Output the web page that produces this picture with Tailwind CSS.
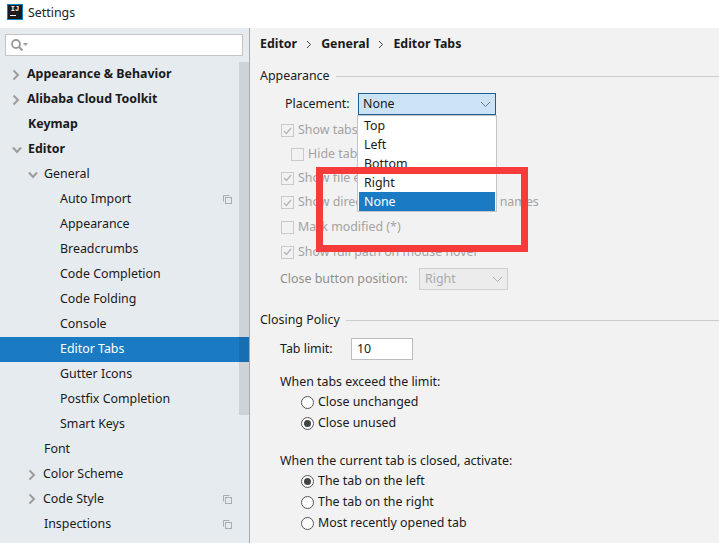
<!DOCTYPE html>
<html>
<head>
<meta charset="utf-8">
<script src="https://cdn.jsdelivr.net/npm/@tailwindcss/browser@4"></script>
</head>
<body class="w-[719px] h-[543px] overflow-hidden bg-[#f2f2f2] font-['Noto_Sans','Open_Sans',sans-serif] text-[12.4px] text-[#1a1a1a]">
<div class="relative w-[719px] h-[543px] flex flex-col overflow-hidden">
  <!-- title bar -->
  <div class="h-[28px] bg-white flex items-center pl-[7px] gap-[5px] shrink-0">
    <div class="self-start mt-[4px] w-[16px] h-[16px] bg-[#1b1b1b] border border-[#1c7ec9] text-white text-[7px] font-bold leading-[9px] text-center font-['Liberation_Mono',monospace]">IJ<div class="w-[6px] h-px bg-white ml-[2px] mt-px"></div></div>
    <span class="text-[#222] mb-[1px]">Settings</span>
  </div>
  <div class="flex flex-1 min-h-0">
    <!-- sidebar -->
    <aside class="relative w-[250px] shrink-0 bg-[#e6ebf0] border-r border-[#a9a9a9] flex flex-col">
      <div class="mx-[5px] mt-[6px] h-[22px] w-[238px] bg-white border border-[#c4c4c4] flex items-center pl-[4px] shrink-0">
        <svg width="18" height="14" viewBox="0 0 18 14" fill="none"><circle cx="6" cy="6" r="4" stroke="#9a9a9a" stroke-width="1.8"/><path d="M9 9l3.500 3.500" stroke="#9a9a9a" stroke-width="2"/><path d="M13 5h5l-2.500 3z" fill="#9a9a9a"/></svg>
      </div>
      <div class="absolute left-[239px] top-[34px] w-[10px] h-[353px] bg-black/10 z-10"></div>
      <nav class="mt-[6px]">
        <div class="h-[25px] flex items-center pl-[12px] font-bold"><svg class="w-[8px] h-[12px] mr-[7px]" viewBox="0 0 8 12" fill="none"><path d="M1.500 1.500L6 6l-4.500 4.500" stroke="#9c9c9c" stroke-width="2"/></svg>Appearance &amp; Behavior</div>
        <div class="h-[25px] flex items-center pl-[12px] font-bold"><svg class="w-[8px] h-[12px] mr-[7px]" viewBox="0 0 8 12" fill="none"><path d="M1.500 1.500L6 6l-4.500 4.500" stroke="#9c9c9c" stroke-width="2"/></svg>Alibaba Cloud Toolkit</div>
        <div class="h-[25px] flex items-center pl-[28px] font-bold">Keymap</div>
        <div class="h-[25px] flex items-center pl-[12px] font-bold"><svg class="w-[10px] h-[8px] mr-[6px]" viewBox="0 0 10 8" fill="none"><path d="M1 1.500l4 4.500 4-4.500" stroke="#9c9c9c" stroke-width="2"/></svg>Editor</div>
        <div class="h-[25px] flex items-center pl-[28px]"><svg class="w-[10px] h-[8px] mr-[6px]" viewBox="0 0 10 8" fill="none"><path d="M1 1.500l4 4.500 4-4.500" stroke="#9c9c9c" stroke-width="2"/></svg>General</div>
        <div class="h-[25px] flex items-center justify-between pl-[60px] pr-[17px]">Auto Import<svg width="9" height="9" viewBox="0 0 9 9" fill="none" stroke="#a8adb2"><path d="M.5 6.500V.5h6"/><rect x="2.500" y="2.500" width="6" height="6"/></svg></div>
        <div class="h-[25px] flex items-center pl-[60px]">Appearance</div>
        <div class="h-[25px] flex items-center pl-[60px]">Breadcrumbs</div>
        <div class="h-[25px] flex items-center pl-[60px]">Code Completion</div>
        <div class="h-[25px] flex items-center pl-[60px]">Code Folding</div>
        <div class="h-[25px] flex items-center pl-[60px]">Console</div>
        <div class="h-[25px] flex items-center pl-[60px] bg-[#1a7bc4] text-white">Editor Tabs</div>
        <div class="h-[25px] flex items-center pl-[60px]">Gutter Icons</div>
        <div class="h-[25px] flex items-center pl-[60px]">Postfix Completion</div>
        <div class="h-[25px] flex items-center pl-[60px]">Smart Keys</div>
        <div class="h-[25px] flex items-center pl-[44px]">Font</div>
        <div class="h-[25px] flex items-center pl-[28px]"><svg class="w-[8px] h-[12px] mr-[7px]" viewBox="0 0 8 12" fill="none"><path d="M1.500 1.500L6 6l-4.500 4.500" stroke="#9c9c9c" stroke-width="2"/></svg>Color Scheme</div>
        <div class="h-[25px] flex items-center justify-between pl-[28px] pr-[17px]"><span class="flex items-center"><svg class="w-[8px] h-[12px] mr-[7px]" viewBox="0 0 8 12" fill="none"><path d="M1.500 1.500L6 6l-4.500 4.500" stroke="#9c9c9c" stroke-width="2"/></svg>Code Style</span><svg width="9" height="9" viewBox="0 0 9 9" fill="none" stroke="#a8adb2"><path d="M.5 6.500V.5h6"/><rect x="2.500" y="2.500" width="6" height="6"/></svg></div>
        <div class="h-[25px] flex items-center justify-between pl-[44px] pr-[17px]">Inspections<svg width="9" height="9" viewBox="0 0 9 9" fill="none" stroke="#a8adb2"><path d="M.5 6.500V.5h6"/><rect x="2.500" y="2.500" width="6" height="6"/></svg></div>
      </nav>
    </aside>
    <!-- main -->
    <main class="flex-1 pl-[10px] min-w-0">
      <div class="h-[32px] flex items-center font-bold">
        <span>Editor</span>
        <svg class="mx-[9px]" width="6" height="9" viewBox="0 0 6 9" fill="none"><path d="M1 1l3.500 3.500L1 8" stroke="#444"/></svg>
        <span>General</span>
        <svg class="mx-[9px]" width="6" height="9" viewBox="0 0 6 9" fill="none"><path d="M1 1l3.500 3.500L1 8" stroke="#444"/></svg>
        <span>Editor Tabs</span>
      </div>
      <div class="h-[32px] flex items-center gap-[6px]"><span>Appearance</span><span class="flex-1 h-px bg-[#cdcdcd]"></span></div>
      <div class="h-[26px] ml-[25px] mt-[-1px] flex items-center">
        <span class="w-[73px] pt-px">Placement:</span>
        <div class="w-[138px] h-[22px] bg-[#cce3f6] border border-[#1c5f96] flex items-center justify-between pl-[4px] pr-[4px]"><span class="pt-px">None</span><svg width="11" height="7" viewBox="0 0 11 7" fill="none"><path d="M1 1l4.500 4.500L10 1" stroke="#6f7b85"/></svg></div>
      </div>
      <div class="text-[#a3a3a3] mt-[1px]">
        <div class="h-[25px] ml-[21px] flex items-center gap-[4px]"><span class="w-[13px] h-[13px] border border-[#c9c9c9] bg-[#f2f2f2] flex items-center justify-center"><svg width="9" height="8" viewBox="0 0 9 8" fill="none"><path d="M1 4l2.500 2.500L8 1" stroke="#b5b5b5" stroke-width="1.300"/></svg></span>Show tabs in one row</div>
        <div class="h-[23px] ml-[31px] flex items-center gap-[4px]"><span class="w-[13px] h-[13px] border border-[#c9c9c9] bg-[#f2f2f2]"></span>Hide tabs if there is no space</div>
        <div class="h-[24px] ml-[21px] flex items-center gap-[4px]"><span class="w-[13px] h-[13px] border border-[#c9c9c9] bg-[#f2f2f2] flex items-center justify-center"><svg width="9" height="8" viewBox="0 0 9 8" fill="none"><path d="M1 4l2.500 2.500L8 1" stroke="#b5b5b5" stroke-width="1.300"/></svg></span>Show file extension</div>
        <div class="h-[25px] ml-[21px] flex items-center gap-[4px]"><span class="w-[13px] h-[13px] border border-[#c9c9c9] bg-[#f2f2f2] flex items-center justify-center"><svg width="9" height="8" viewBox="0 0 9 8" fill="none"><path d="M1 4l2.500 2.500L8 1" stroke="#b5b5b5" stroke-width="1.300"/></svg></span>Show directory for non-unique file names</div>
        <div class="h-[25px] ml-[21px] flex items-center gap-[4px]"><span class="w-[13px] h-[13px] border border-[#c9c9c9] bg-[#f2f2f2]"></span>Mark modified (*)</div>
        <div class="h-[24px] ml-[21px] flex items-center gap-[4px]"><span class="w-[13px] h-[13px] border border-[#c9c9c9] bg-[#f2f2f2] flex items-center justify-center"><svg width="9" height="8" viewBox="0 0 9 8" fill="none"><path d="M1 4l2.500 2.500L8 1" stroke="#b5b5b5" stroke-width="1.300"/></svg></span>Show full path on mouse hover</div>
        <div class="h-[22px] mt-[4px] ml-[20px] flex items-center">
          <span class="w-[139px] text-[#8f8f8f]">Close button position:</span>
          <div class="w-[89px] h-[22px] bg-[#ececec] border border-[#cfcfcf] flex items-center justify-between pl-[5px] pr-[4px] text-[#aaa]">Right<svg width="11" height="7" viewBox="0 0 11 7" fill="none"><path d="M1 1l4.500 4.500L10 1" stroke="#b0b0b0"/></svg></div>
        </div>
      </div>
      <div class="h-[20px] mt-[20px] flex items-center gap-[6px]"><span>Closing Policy</span><span class="flex-1 h-px bg-[#cdcdcd]"></span></div>
      <div class="h-[22px] mt-[8px] ml-[20px] flex items-center">
        <span class="w-[71px]">Tab limit:</span>
        <div class="w-[62px] h-[22px] bg-white border border-[#bdbdbd] flex items-center pl-[5px]">10</div>
      </div>
      <div class="h-[20px] mt-[12px] ml-[20px] flex items-center">When tabs exceed the limit:</div>
      <div class="ml-[41px]">
        <div class="h-[21px] flex items-center gap-[4px]"><span class="w-[13px] h-[13px] rounded-full border border-[#555] bg-white"></span>Close unchanged</div>
        <div class="h-[21px] flex items-center gap-[4px]"><span class="w-[13px] h-[13px] rounded-full border border-[#555] bg-white flex items-center justify-center"><span class="w-[7px] h-[7px] rounded-full bg-[#444]"></span></span>Close unused</div>
      </div>
      <div class="h-[20px] mt-[17px] ml-[20px] flex items-center">When the current tab is closed, activate:</div>
      <div class="ml-[41px]">
        <div class="h-[21px] flex items-center gap-[4px]"><span class="w-[13px] h-[13px] rounded-full border border-[#555] bg-white flex items-center justify-center"><span class="w-[7px] h-[7px] rounded-full bg-[#444]"></span></span>The tab on the left</div>
        <div class="h-[21px] flex items-center gap-[4px]"><span class="w-[13px] h-[13px] rounded-full border border-[#555] bg-white"></span>The tab on the right</div>
        <div class="h-[21px] flex items-center gap-[4px]"><span class="w-[13px] h-[13px] rounded-full border border-[#555] bg-white"></span>Most recently opened tab</div>
      </div>
    </main>
  </div>
  <!-- dropdown popup -->
  <div class="absolute left-[357px] top-[115px] w-[140px] h-[97px] bg-white border border-[#c4c4c4] px-px z-20">
    <div class="h-[19px] pl-[5px] pt-px flex items-center">Top</div>
    <div class="h-[19px] pl-[5px] pt-px flex items-center">Left</div>
    <div class="h-[19px] pl-[5px] pt-px flex items-center">Bottom</div>
    <div class="h-[19px] pl-[5px] pt-px flex items-center">Right</div>
    <div class="h-[19px] pl-[5px] pt-px flex items-center bg-[#1a7bc4] text-white">None</div>
  </div>
  <!-- red annotation -->
  <div class="absolute left-[316px] top-[167px] w-[212px] h-[85px] border-[7px] border-[#f73b3b] z-30"></div>
</div>
</body>
</html>
